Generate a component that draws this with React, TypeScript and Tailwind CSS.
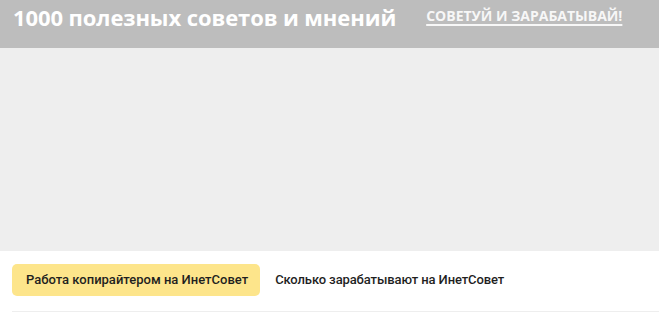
export default function App() {
  return (
    <div className="w-[659px] h-[316px] overflow-hidden bg-white" style={{ fontFamily: "Roboto, 'Noto Sans', sans-serif" }}>
      <header className="h-[48px] bg-[#bdbdbd] flex items-start pl-[13px] pt-[2px]" style={{ fontFamily: "'Open Sans', Roboto, sans-serif" }}>
        <h1 className="text-[22px] leading-[30px] font-bold text-white tracking-[-0.1px] whitespace-nowrap">1000 полезных советов и мнений</h1>
        <a href="#" className="ml-[30px] mt-[4px] text-[14px] leading-[20px] font-bold text-[#f7f7f7] underline underline-offset-[3px] decoration-[1.5px] whitespace-nowrap">СОВЕТУЙ И ЗАРАБАТЫВАЙ!</a>
      </header>
      <div className="h-[203px] bg-[#eeeeee]" />
      <div className="pl-[12px] pt-[13px]">
        <nav className="flex items-center pb-[15px] border-b border-[#eeeeee]">
          <a href="#" className="h-[32px] flex items-center pl-[14px] pr-[12px] rounded-[5px] bg-[#fde58b] text-[13px] font-medium text-[#1f1f1f] whitespace-nowrap">Работа копирайтером на ИнетСовет</a>
          <a href="#" className="h-[32px] flex items-center px-[15px] text-[13px] font-medium tracking-[-0.12px] text-[#1f1f1f] whitespace-nowrap">Сколько зарабатывают на ИнетСовет</a>
        </nav>
      </div>
    </div>
  );
}
